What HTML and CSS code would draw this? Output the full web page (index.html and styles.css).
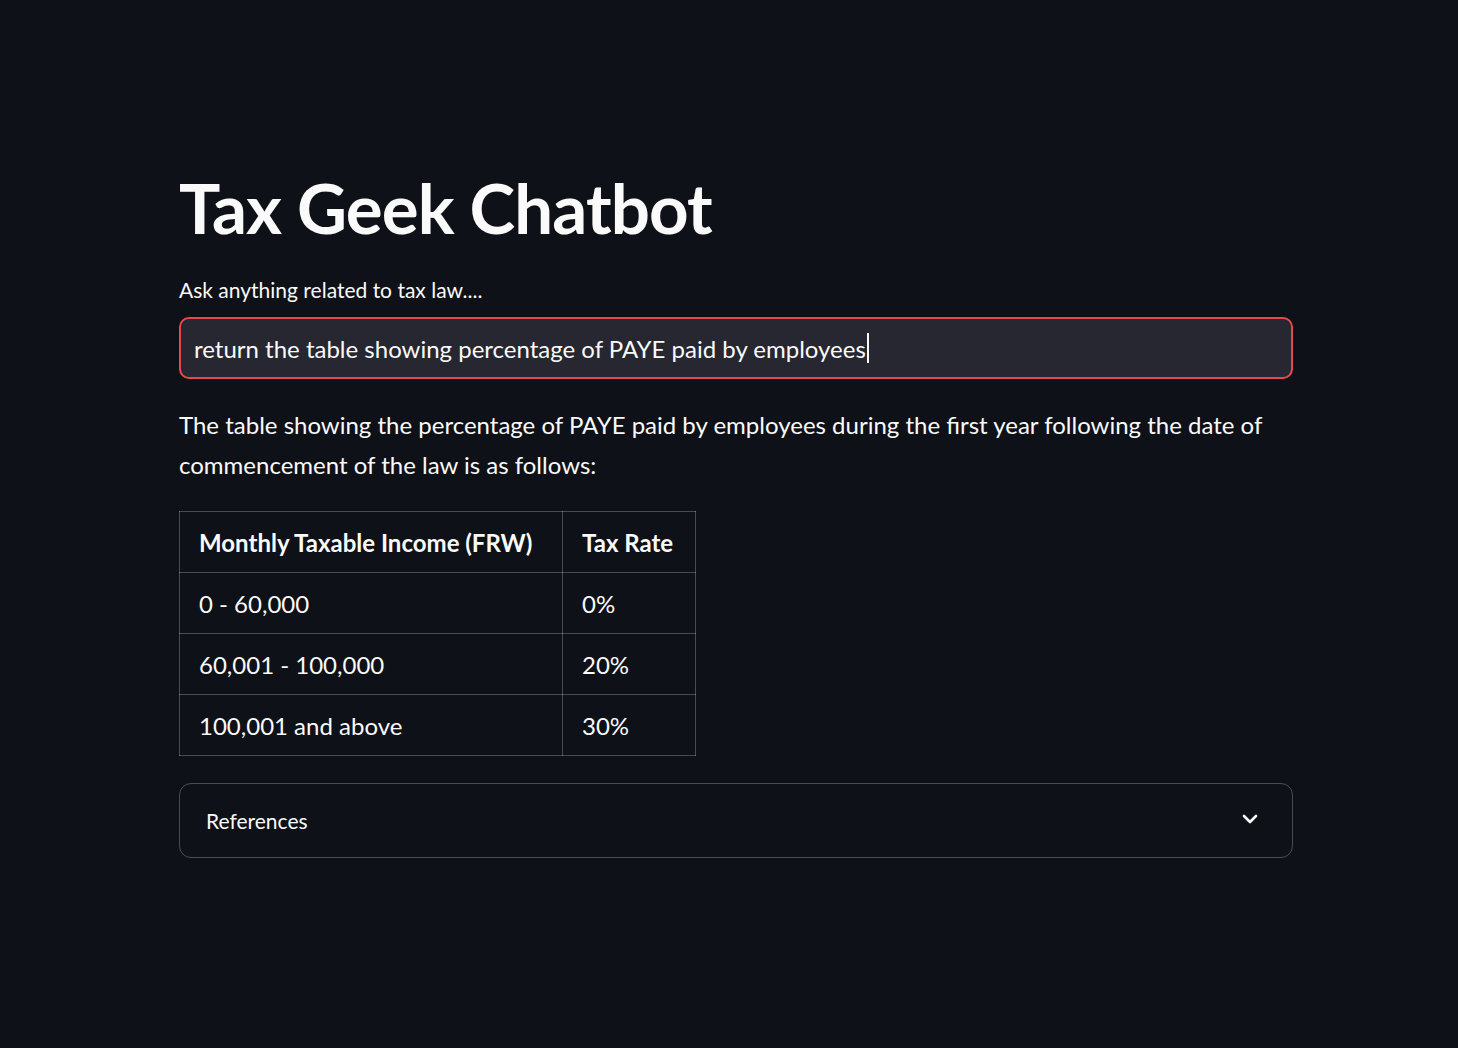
FILE: index.html
```html
<!DOCTYPE html>
<html lang="en">
<head>
<meta charset="utf-8">
<title>Tax Geek Chatbot</title>
<link rel="stylesheet" href="styles.css">
</head>
<body>
<main class="main">
  <div class="block">
    <h1 class="title">Tax Geek Chatbot</h1>
    <label class="label" for="q">Ask anything related to tax law....</label>
    <div class="input-wrap">
      <span class="input-text">return the table showing percentage of PAYE paid by employees</span><span class="caret"></span>
    </div>
    <p class="answer">The table showing the percentage of PAYE paid by employees during the first year following the date of commencement of the law is as follows:</p>
    <table class="tax-table">
      <thead>
        <tr><th class="col-income">Monthly Taxable Income (FRW)</th><th class="col-rate">Tax Rate</th></tr>
      </thead>
      <tbody>
        <tr><td>0 - 60,000</td><td>0%</td></tr>
        <tr><td>60,001 - 100,000</td><td>20%</td></tr>
        <tr><td>100,001 and above</td><td>30%</td></tr>
      </tbody>
    </table>
    <div class="expander">
      <span class="exp-label">References</span>
      <svg class="chevron" width="20" height="20" viewBox="0 0 20 20"><path d="M4 7 L10 13 L16 7" fill="none" stroke="#fafafa" stroke-width="2.6" stroke-linecap="round" stroke-linejoin="round"/></svg>
    </div>
  </div>
</main>
</body>
</html>
```
FILE: styles.css
```css
html, body {
  margin: 0;
  padding: 0;
  background: #0e1117;
  color: #fafafa;
  font-family: Lato, "Noto Sans", sans-serif;
}
.main {
  padding: 160px 0 100px 179px;
}
.block {
  width: 1114px;
  display: flex;
  flex-direction: column;
}
.title {
  margin: 0;
  font-size: 69px;
  font-weight: 700;
  line-height: 96px;
  letter-spacing: -0.9px;
}
.label {
  margin-top: 20px;
  font-size: 21px;
  line-height: 28px;
}
.input-wrap {
  margin-top: 13px;
  height: 58px;
  border: 2px solid #e6494c;
  border-radius: 10px;
  background: #262730;
  display: flex;
  align-items: center;
  padding-left: 13px;
  font-size: 24px;
}
.caret {
  display: inline-block;
  width: 2px;
  height: 30px;
  background: #fafafa;
  margin-left: 1px;
}
.answer {
  margin: 26px 0 0;
  font-size: 24px;
  line-height: 40px;
}
.tax-table {
  margin-top: 26px;
  border-collapse: collapse;
  font-size: 24px;
  align-self: flex-start;
}
.tax-table th, .tax-table td {
  border: 1px solid rgba(250, 250, 250, 0.25);
  text-align: left;
  padding: 0 19px;
  height: 61px;
  box-sizing: border-box;
}
.tax-table th {
  font-weight: 700;
}
.col-income {
  width: 383px;
}
.col-rate {
  width: 133px;
}
.expander {
  margin-top: 27px;
  height: 73px;
  border: 1px solid rgba(250, 250, 250, 0.25);
  border-radius: 12px;
  display: flex;
  align-items: center;
  justify-content: space-between;
  padding: 0 32px 0 26px;
}
.exp-label {
  font-size: 21px;
}
.chevron {
  display: block;
  margin-top: -4px;
}
```
